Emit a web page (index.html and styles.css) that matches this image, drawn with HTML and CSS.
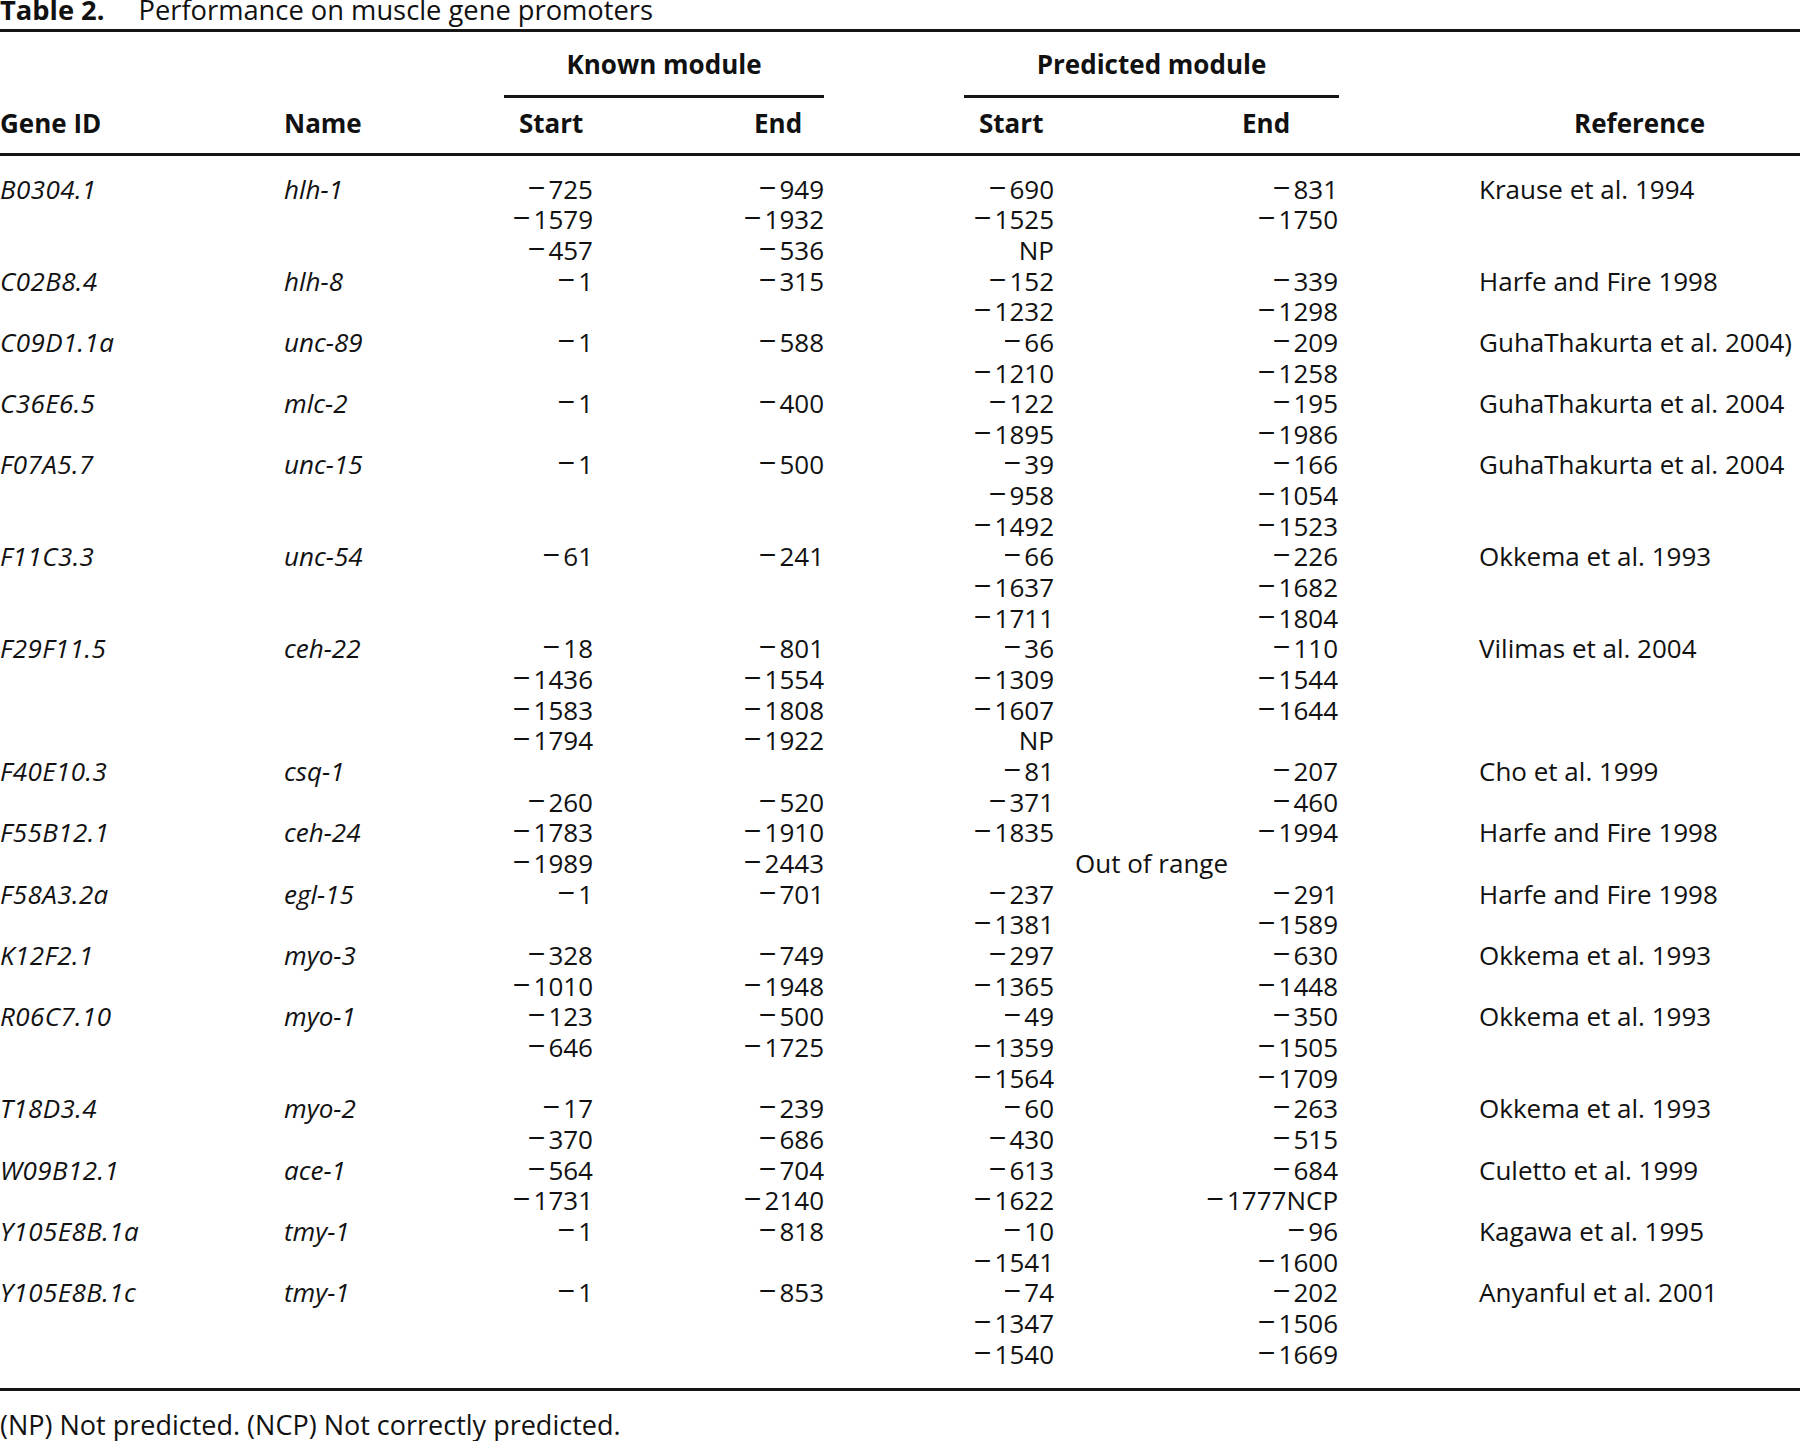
FILE: index.html
```html
<!DOCTYPE html>
<html>
<head>
  <meta charset="utf-8">
  <meta name="viewport" content="width=device-width">
  <title>Table 2. Performance on muscle gene promoters</title>
  <link rel="stylesheet" href="styles.css">
</head>
<body>
  <div class="caption"><strong>Table 2.</strong>Performance on muscle gene promoters</div>
  <table class="results">
    <colgroup>
      <col class="c-gene">
      <col class="c-name">
      <col class="c-kstart">
      <col class="c-kend">
      <col class="c-gap">
      <col class="c-pstart">
      <col class="c-pend">
      <col class="c-ref">
    </colgroup>
    <thead>
      <tr class="group">
        <th colspan="2"></th>
        <th colspan="2" class="span">Known module</th>
        <th></th>
        <th colspan="2" class="span">Predicted module</th>
        <th></th>
      </tr>
      <tr class="cols">
        <th>Gene ID</th>
        <th>Name</th>
        <th class="ks">Start</th>
        <th class="ke">End</th>
        <th></th>
        <th class="ps">Start</th>
        <th class="pe">End</th>
        <th class="ref">Reference</th>
      </tr>
    </thead>
    <tbody>
      <!-- B0304.1 -->
      <tr><td class="gene">B0304.1</td><td class="name">hlh-1</td><td class="ks">−725</td><td class="ke">−949</td><td></td><td class="ps">−690</td><td class="pe">−831</td><td class="ref">Krause et al. 1994</td></tr>
      <tr><td></td><td></td><td class="ks">−1579</td><td class="ke">−1932</td><td></td><td class="ps">−1525</td><td class="pe">−1750</td><td></td></tr>
      <tr><td></td><td></td><td class="ks">−457</td><td class="ke">−536</td><td></td><td class="ps np">NP</td><td class="pe"></td><td></td></tr>
      <!-- C02B8.4 -->
      <tr><td class="gene">C02B8.4</td><td class="name">hlh-8</td><td class="ks">−1</td><td class="ke">−315</td><td></td><td class="ps">−152</td><td class="pe">−339</td><td class="ref">Harfe and Fire 1998</td></tr>
      <tr><td></td><td></td><td class="ks"></td><td class="ke"></td><td></td><td class="ps">−1232</td><td class="pe">−1298</td><td></td></tr>
      <!-- C09D1.1a -->
      <tr><td class="gene">C09D1.1a</td><td class="name">unc-89</td><td class="ks">−1</td><td class="ke">−588</td><td></td><td class="ps">−66</td><td class="pe">−209</td><td class="ref">GuhaThakurta et al. 2004)</td></tr>
      <tr><td></td><td></td><td class="ks"></td><td class="ke"></td><td></td><td class="ps">−1210</td><td class="pe">−1258</td><td></td></tr>
      <!-- C36E6.5 -->
      <tr><td class="gene">C36E6.5</td><td class="name">mlc-2</td><td class="ks">−1</td><td class="ke">−400</td><td></td><td class="ps">−122</td><td class="pe">−195</td><td class="ref">GuhaThakurta et al. 2004</td></tr>
      <tr><td></td><td></td><td class="ks"></td><td class="ke"></td><td></td><td class="ps">−1895</td><td class="pe">−1986</td><td></td></tr>
      <!-- F07A5.7 -->
      <tr><td class="gene">F07A5.7</td><td class="name">unc-15</td><td class="ks">−1</td><td class="ke">−500</td><td></td><td class="ps">−39</td><td class="pe">−166</td><td class="ref">GuhaThakurta et al. 2004</td></tr>
      <tr><td></td><td></td><td class="ks"></td><td class="ke"></td><td></td><td class="ps">−958</td><td class="pe">−1054</td><td></td></tr>
      <tr><td></td><td></td><td class="ks"></td><td class="ke"></td><td></td><td class="ps">−1492</td><td class="pe">−1523</td><td></td></tr>
      <!-- F11C3.3 -->
      <tr><td class="gene">F11C3.3</td><td class="name">unc-54</td><td class="ks">−61</td><td class="ke">−241</td><td></td><td class="ps">−66</td><td class="pe">−226</td><td class="ref">Okkema et al. 1993</td></tr>
      <tr><td></td><td></td><td class="ks"></td><td class="ke"></td><td></td><td class="ps">−1637</td><td class="pe">−1682</td><td></td></tr>
      <tr><td></td><td></td><td class="ks"></td><td class="ke"></td><td></td><td class="ps">−1711</td><td class="pe">−1804</td><td></td></tr>
      <!-- F29F11.5 -->
      <tr><td class="gene">F29F11.5</td><td class="name">ceh-22</td><td class="ks">−18</td><td class="ke">−801</td><td></td><td class="ps">−36</td><td class="pe">−110</td><td class="ref">Vilimas et al. 2004</td></tr>
      <tr><td></td><td></td><td class="ks">−1436</td><td class="ke">−1554</td><td></td><td class="ps">−1309</td><td class="pe">−1544</td><td></td></tr>
      <tr><td></td><td></td><td class="ks">−1583</td><td class="ke">−1808</td><td></td><td class="ps">−1607</td><td class="pe">−1644</td><td></td></tr>
      <tr><td></td><td></td><td class="ks">−1794</td><td class="ke">−1922</td><td></td><td class="ps np">NP</td><td class="pe"></td><td></td></tr>
      <!-- F40E10.3 -->
      <tr><td class="gene">F40E10.3</td><td class="name">csq-1</td><td class="ks"></td><td class="ke"></td><td></td><td class="ps">−81</td><td class="pe">−207</td><td class="ref">Cho et al. 1999</td></tr>
      <tr><td></td><td></td><td class="ks">−260</td><td class="ke">−520</td><td></td><td class="ps">−371</td><td class="pe">−460</td><td></td></tr>
      <!-- F55B12.1 -->
      <tr><td class="gene">F55B12.1</td><td class="name">ceh-24</td><td class="ks">−1783</td><td class="ke">−1910</td><td></td><td class="ps">−1835</td><td class="pe">−1994</td><td class="ref">Harfe and Fire 1998</td></tr>
      <tr><td></td><td></td><td class="ks">−1989</td><td class="ke">−2443</td><td></td><td colspan="2" class="range">Out of range</td><td></td></tr>
      <!-- F58A3.2a -->
      <tr><td class="gene">F58A3.2a</td><td class="name">egl-15</td><td class="ks">−1</td><td class="ke">−701</td><td></td><td class="ps">−237</td><td class="pe">−291</td><td class="ref">Harfe and Fire 1998</td></tr>
      <tr><td></td><td></td><td class="ks"></td><td class="ke"></td><td></td><td class="ps">−1381</td><td class="pe">−1589</td><td></td></tr>
      <!-- K12F2.1 -->
      <tr><td class="gene">K12F2.1</td><td class="name">myo-3</td><td class="ks">−328</td><td class="ke">−749</td><td></td><td class="ps">−297</td><td class="pe">−630</td><td class="ref">Okkema et al. 1993</td></tr>
      <tr><td></td><td></td><td class="ks">−1010</td><td class="ke">−1948</td><td></td><td class="ps">−1365</td><td class="pe">−1448</td><td></td></tr>
      <!-- R06C7.10 -->
      <tr><td class="gene">R06C7.10</td><td class="name">myo-1</td><td class="ks">−123</td><td class="ke">−500</td><td></td><td class="ps">−49</td><td class="pe">−350</td><td class="ref">Okkema et al. 1993</td></tr>
      <tr><td></td><td></td><td class="ks">−646</td><td class="ke">−1725</td><td></td><td class="ps">−1359</td><td class="pe">−1505</td><td></td></tr>
      <tr><td></td><td></td><td class="ks"></td><td class="ke"></td><td></td><td class="ps">−1564</td><td class="pe">−1709</td><td></td></tr>
      <!-- T18D3.4 -->
      <tr><td class="gene">T18D3.4</td><td class="name">myo-2</td><td class="ks">−17</td><td class="ke">−239</td><td></td><td class="ps">−60</td><td class="pe">−263</td><td class="ref">Okkema et al. 1993</td></tr>
      <tr><td></td><td></td><td class="ks">−370</td><td class="ke">−686</td><td></td><td class="ps">−430</td><td class="pe">−515</td><td></td></tr>
      <!-- W09B12.1 -->
      <tr><td class="gene">W09B12.1</td><td class="name">ace-1</td><td class="ks">−564</td><td class="ke">−704</td><td></td><td class="ps">−613</td><td class="pe">−684</td><td class="ref">Culetto et al. 1999</td></tr>
      <tr><td></td><td></td><td class="ks">−1731</td><td class="ke">−2140</td><td></td><td class="ps">−1622</td><td class="pe">−1777NCP</td><td></td></tr>
      <!-- Y105E8B.1a -->
      <tr><td class="gene">Y105E8B.1a</td><td class="name">tmy-1</td><td class="ks">−1</td><td class="ke">−818</td><td></td><td class="ps">−10</td><td class="pe">−96</td><td class="ref">Kagawa et al. 1995</td></tr>
      <tr><td></td><td></td><td class="ks"></td><td class="ke"></td><td></td><td class="ps">−1541</td><td class="pe">−1600</td><td></td></tr>
      <!-- Y105E8B.1c -->
      <tr><td class="gene">Y105E8B.1c</td><td class="name">tmy-1</td><td class="ks">−1</td><td class="ke">−853</td><td></td><td class="ps">−74</td><td class="pe">−202</td><td class="ref">Anyanful et al. 2001</td></tr>
      <tr><td></td><td></td><td class="ks"></td><td class="ke"></td><td></td><td class="ps">−1347</td><td class="pe">−1506</td><td></td></tr>
      <tr><td></td><td></td><td class="ks"></td><td class="ke"></td><td></td><td class="ps">−1540</td><td class="pe">−1669</td><td></td></tr>
    </tbody>
  </table>
  <p class="note">(NP) Not predicted. (NCP) Not correctly predicted.</p>
</body>
</html>
```

FILE: styles.css
```css
html, body, p, table, th, td {
  margin: 0;
  padding: 0;
  box-sizing: border-box;
}

body {
  background-color: #fff;
  color: #111;
  font-family: 'Open Sans', 'Liberation Sans', sans-serif;
  font-size: 26px;
  overflow: hidden;
}

.caption {
  font-size: 27.3px;
  line-height: 20.8px;
  margin-bottom: 8.2px;
  white-space: nowrap;
}

.caption strong {
  font-weight: 700;
  margin-right: 34px;
}

/* table */
.results {
  width: 1800px;
  table-layout: fixed;
  border-collapse: separate;
  border-spacing: 0;
  border-top: 3px solid #151515;
  border-bottom: 3px solid #151515;
}

.c-gene { width: 284px; }
.c-name { width: 220px; }
.c-kstart { width: 160px; }
.c-kend { width: 160px; }
.c-gap { width: 140px; }
.c-pstart { width: 187px; }
.c-pend { width: 188px; }
.c-ref { width: 461px; }

.results th,
.results td {
  line-height: 30.66px;
  white-space: nowrap;
  text-align: left;
  vertical-align: top;
}

.results th {
  font-weight: 700;
}

.group th {
  padding-top: 16.6px;
  padding-bottom: 15.8px;
}

.group th.span {
  text-align: center;
  border-bottom: 3px solid #151515;
}

.cols th {
  padding-top: 9.6px;
  padding-bottom: 14.8px;
  border-bottom: 3px solid #151515;
}

.cols th.ks,
.cols th.ps { padding-left: 15px; }
.cols th.ke { padding-left: 90px; }
.cols th.pe { padding-left: 91px; }
.cols th.ref {
  text-align: center;
  padding-left: 140px;
}

tbody tr:first-child td { padding-top: 17.5px; }
tbody tr:last-child td { padding-bottom: 18.7px; }

.gene,
.name {
  font-style: italic;
}

.gene {
  letter-spacing: 0.4px;
}

td.ks,
td.ke,
td.ps,
td.pe {
  text-align: right;
}

/* the minus sign is set wider and a little apart from the digits */
td.ks::first-letter,
td.ke::first-letter,
td.ps:not(.np)::first-letter,
td.pe::first-letter {
  font-size: 31px;
  line-height: 0;
  padding-right: 3px;
}

td.ks { padding-right: 71px; }
td.ps { padding-right: 97px; }
td.pe { padding-right: 1px; }

td.range {
  text-align: center;
}

td.ref {
  padding-left: 140px;
}

.note {
  margin-top: 19.6px;
  font-size: 27px;
  line-height: 30.66px;
  white-space: nowrap;
}
```
